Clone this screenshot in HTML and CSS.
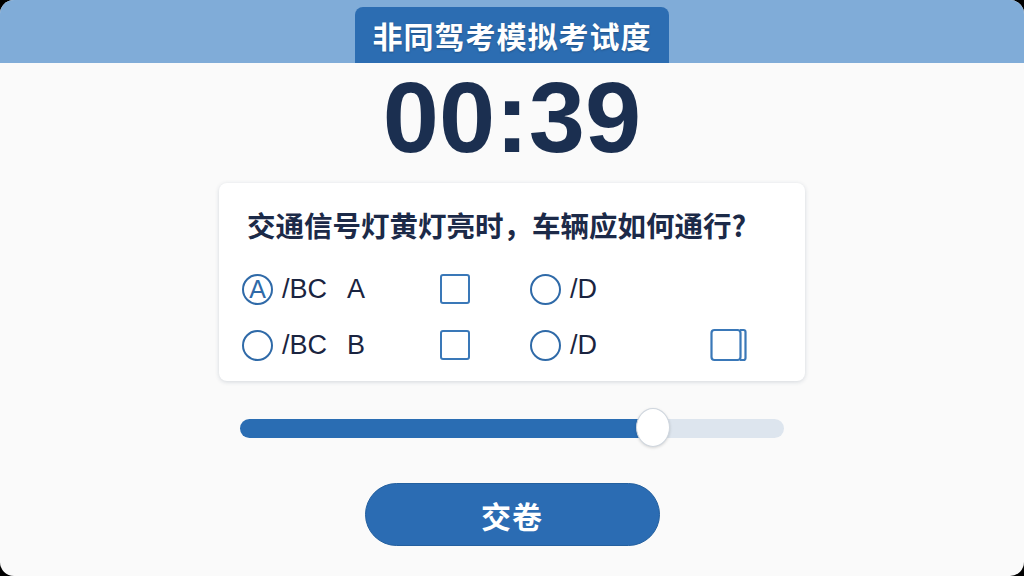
FILE: index.html
```html
<!doctype html>
<html lang="zh-CN">
<head>
    <meta charset="UTF-8">
    <meta name="viewport" content="width=device-width, initial-scale=1.0">
    <title>非同驾考模拟考试度</title>
    <link rel="stylesheet" href="styles.css">
</head>
<body>
    <div class="screen">
        <header class="topbar">
            <h1 class="title-tab">非同驾考模拟考试度</h1>
        </header>
        <main class="content">
            <div class="timer">00:39</div>
            <section class="card">
                <h2 class="question">交通信号灯黄灯亮时，车辆应如何通行?</h2>
                <div class="options">
                    <label class="opt"><span class="radio checked">A</span>/BC<span class="opt-key">A</span></label>
                    <span class="box"></span>
                    <label class="opt"><span class="radio"></span>/D</label>
                    <span></span>

                    <label class="opt"><span class="radio"></span>/BC<span class="opt-key">B</span></label>
                    <span class="box"></span>
                    <label class="opt"><span class="radio"></span>/D</label>
                    <svg class="box-stack" width="38" height="34" viewBox="0 0 38 34">
                        <rect x="1.5" y="2" width="29" height="30" rx="3" fill="none" stroke="#3a78b8" stroke-width="2.2"/>
                        <path d="M30 2h3.5a2 2 0 0 1 2 2v26a2 2 0 0 1-2 2H30" fill="none" stroke="#3a78b8" stroke-width="2.2"/>
                    </svg>
                </div>
            </section>
            <div class="slider">
                <div class="slider-fill" style="width: 76%"></div>
                <span class="slider-thumb" style="left: 76%"></span>
            </div>
            <button class="submit">交卷</button>
        </main>
    </div>
</body>
</html>
```

FILE: styles.css
```css
body {
    margin: 0;
    background-color: #000000;
    font-family: "Liberation Sans", "Noto Sans CJK SC", sans-serif;
}

.screen {
    width: 1024px;
    height: 576px;
    border-radius: 14px;
    overflow: hidden;
    background-color: #fafafa;
}

.topbar {
    height: 63px;
    background-color: #80acd8;
    display: flex;
    justify-content: center;
    align-items: flex-end;
}

.title-tab {
    margin: 0;
    width: 314px;
    height: 56px;
    box-sizing: border-box;
    background-color: #2c6db2;
    border-radius: 8px 8px 0 0;
    color: #ffffff;
    font-family: "Noto Sans CJK SC", sans-serif;
    font-size: 30px;
    font-weight: 700;
    letter-spacing: 1px;
    line-height: 56px;
    text-align: center;
    text-shadow: 0 1px 2px rgba(0, 0, 0, 0.25);
}

.content {
    display: flex;
    flex-direction: column;
    align-items: center;
}

.timer {
    margin-top: 4px;
    font-size: 101px;
    font-weight: 700;
    line-height: 1;
    color: #1b2f50;
}

.card {
    margin-top: 15px;
    width: 586px;
    height: 198px;
    box-sizing: border-box;
    padding: 24px 28px 0;
    background-color: #ffffff;
    border-radius: 8px;
    box-shadow: 0 1px 4px rgba(40, 60, 90, 0.18);
}

.question {
    margin: 0;
    font-family: "Noto Sans CJK SC", sans-serif;
    font-size: 28.5px;
    font-weight: 700;
    line-height: 36px;
    color: #1c2a48;
}

.options {
    margin: 26px 0 0 -5px;
    display: grid;
    grid-template-columns: 198px 90px 180px auto;
    grid-auto-rows: 40px;
    row-gap: 16px;
    align-items: center;
}

.opt {
    display: flex;
    align-items: center;
    gap: 9px;
    font-size: 27px;
    color: #1a2440;
}

.radio {
    width: 31px;
    height: 31px;
    box-sizing: border-box;
    border: 2.5px solid #2f6aa8;
    border-radius: 50%;
    display: flex;
    align-items: center;
    justify-content: center;
    font-size: 25px;
    color: #2f6aa8;
}

.opt-key {
    margin-left: 11px;
}

.box {
    width: 30px;
    height: 30px;
    box-sizing: border-box;
    border: 2px solid #3a78b8;
    border-radius: 3px;
}

.box-stack {
    display: block;
}

.slider {
    position: relative;
    margin-top: 38px;
    width: 544px;
    height: 19px;
    border-radius: 10px;
    background-color: #dde5ee;
}

.slider-fill {
    height: 100%;
    border-radius: 10px 0 0 10px;
    background-color: #2a6db3;
}

.slider-thumb {
    position: absolute;
    top: -11px;
    width: 34px;
    height: 39px;
    margin-left: -17px;
    box-sizing: border-box;
    border: 1.5px solid #cfd6de;
    border-radius: 50%;
    background-color: #ffffff;
    box-shadow: 0 1px 3px rgba(0, 0, 0, 0.15);
}

.submit {
    margin-top: 45px;
    width: 295px;
    height: 63px;
    border: 1px solid #24609f;
    border-radius: 32px;
    background-color: #2b6cb3;
    color: #ffffff;
    font-family: "Noto Sans CJK SC", sans-serif;
    font-size: 30px;
    font-weight: 700;
    letter-spacing: 1px;
    cursor: pointer;
}
```
